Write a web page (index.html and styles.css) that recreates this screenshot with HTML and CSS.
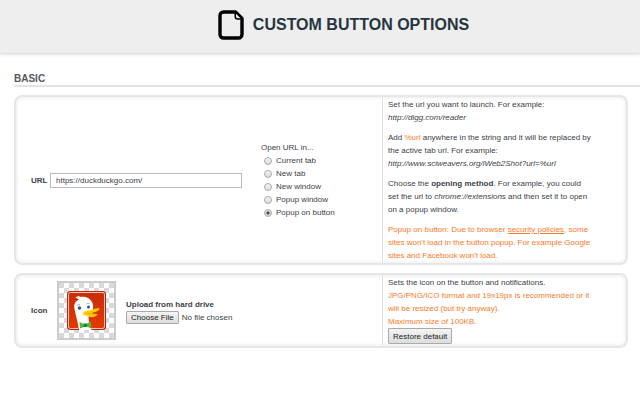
FILE: index.html
```html
<!DOCTYPE html>
<html lang="en">
<head>
<meta charset="utf-8">
<title>Custom Button Options</title>
<link rel="stylesheet" href="styles.css">
</head>
<body>
<header class="top">
  <svg class="logo" viewBox="0 0 26 30" aria-hidden="true">
    <path d="M5.500 2H17.500L24 8.500V24.500A3.500 3.500 0 0 1 20.500 28H5.500A3.500 3.500 0 0 1 2 24.500V5.500A3.500 3.500 0 0 1 5.500 2z" fill="#eee" stroke="#000" stroke-width="3.400" stroke-linejoin="round"/>
    <path d="M17.200 3v3.500q0 2.500 2.500 2.500h3.500" fill="#eee" stroke="#000" stroke-width="1.500"/>
  </svg>
  <h1 class="title">CUSTOM BUTTON OPTIONS</h1>
</header>
<main class="content">
  <h2 class="section-title">BASIC</h2>

  <section class="card">
    <div class="fields">
      <label class="name" for="url">URL</label>
      <input class="url" id="url" type="text" value="https://duckduckgo.com/">
      <fieldset class="modes">
        <legend class="legend">Open URL in...</legend>
        <label class="mode"><input class="radio" type="radio" name="mode">Current tab</label>
        <label class="mode"><input class="radio" type="radio" name="mode">New tab</label>
        <label class="mode"><input class="radio" type="radio" name="mode">New window</label>
        <label class="mode"><input class="radio" type="radio" name="mode">Popup window</label>
        <label class="mode"><input class="radio" type="radio" name="mode" checked>Popup on button</label>
      </fieldset>
    </div>
    <div class="help">
      <p class="para">Set the url you want to launch. For example: <em>http://digg.com/reader</em></p>
      <p class="para">Add <span class="key">%url</span> anywhere in the string and it will be replaced by the active tab url. For example: <em>http://www.sciweavers.org/iWeb2Shot?url=%url</em></p>
      <p class="para">Choose the <strong>opening method</strong>. For example, you could set the url to <em>chrome://extensions</em> and then set it to open on a popup window.</p>
      <p class="para warn">Popup on button: Due to browser <a class="link" href="#">security policies</a>, some sites won't load in the button popup. For example Google sites and Facebook won't load.</p>
    </div>
  </section>

  <section class="card">
    <div class="fields">
      <span class="name">Icon</span>
      <div class="preview">
        <svg class="duck" viewBox="0 0 39 39" role="img" aria-label="DuckDuckGo icon">
          <defs>
            <linearGradient id="red" x1="0" y1="0" x2="0" y2="1">
              <stop offset="0" stop-color="#c92c08"/><stop offset="1" stop-color="#e63900"/>
            </linearGradient>
          </defs>
          <rect x=".5" y=".5" width="38" height="38" rx="2.500" fill="url(#red)" stroke="#b82410"/>
          <path d="M11 37.500H3.500a2 2 0 0 1-2-2v-32a2 2 0 0 1 2-2h32a2 2 0 0 1 2 2v32a2 2 0 0 1-2 2H24" fill="none" stroke="#f7c9bc" stroke-width="1"/>
          <path d="M12 39C11 31 9 26 7.500 18c-1-5 1-8 4.500-9.500L8.500 6.500c2-1.500 4-1.500 5.500-.5 4-.8 9 1 11 5 1.500 3 1.500 6 .5 9l-4 6 .5 6 2.500 7z" fill="#fff"/>
          <path d="M9.800 14.500q1.500-1.500 3.200-.8M19.500 13q1.800-1.200 3.200 0" fill="none" stroke="#6b8eb0" stroke-width=".7"/>
          <circle cx="12.500" cy="17" r="1.700" fill="#2d4f8e"/>
          <circle cx="21.500" cy="16" r="1.500" fill="#2d4f8e"/>
          <path d="M16 22.500c0-2.500 5-2.900 8-3.500 3-.9 6-2.200 8.500-1.500-.5 2.700-5 3.700-8 4.500 2.500 1 4 1 6 1-1 3.200-6 4-9.500 2.200-2-.8-5-.8-5-2.700z" fill="#fc0"/>
          <path d="M20 22.200q4 1.300 9 .8" fill="none" stroke="#d59b00" stroke-width=".7"/>
          <path d="M12.500 31l4.500 2h2l5-2.500.5 7-4.500-1.700h-2.500L13 37.500z" fill="#4cba3c"/>
          <rect x="16.500" y="32.500" width="3.500" height="3.500" rx="1" fill="#16842b"/>
        </svg>
      </div>
      <div class="upload">
        <label class="upload-title" for="file">Upload from hard drive</label>
        <input class="file" id="file" type="file">
      </div>
    </div>
    <div class="help">
      <p class="para">Sets the icon on the button and notifications.<br>
      <span class="warn">JPG/PNG/ICO format and 19x19px is recommended or it will be resized (but try anyway).<br>Maximum size of 100KB.</span></p>
      <button class="btn" type="button">Restore default</button>
    </div>
  </section>
</main>
</body>
</html>
```
FILE: styles.css
```css
* { box-sizing: border-box; }

body {
  margin: 0;
  background: #fff;
  color: #3c4146;
  font: 8px/13px "Liberation Sans", Arial, sans-serif;
}

.top {
  display: flex;
  align-items: center;
  justify-content: center;
  gap: 9px;
  height: 54px;
  padding: 0 0 3px 47px;
  background: #eee;
  border-bottom: 1px solid #e2e2e2;
  box-shadow: 0 1px 3px #e2e2e2;
}
.logo { width: 26px; height: 30px; }
.title {
  margin: 0;
  color: #263540;
  font-size: 16px;
  line-height: 20px;
}

.content { padding: 18px 0 0 14px; }
.section-title {
  margin: 0 0 8px;
  border-bottom: 2px solid #e4e4e4;
  color: #55595d;
  font-size: 10px;
  line-height: 13px;
}

.card {
  display: grid;
  grid-template-columns: minmax(0, 3fr) minmax(0, 2fr);
  margin: 0 12px 8px 0;
  padding: 1px 0;
  border: 2px solid #e6e6e6;
  border-radius: 8px;
  box-shadow: inset 0 0 4px #e4e4e4;
}

.fields {
  display: flex;
  align-items: center;
  padding-left: 15px;
}
.name {
  width: 19px;
  font-weight: bold;
}
.url {
  flex: 1;
  min-width: 0;
  height: 15px;
  padding: 0 5px;
  border: 1px solid #bbb;
  background: #fff;
  color: inherit;
  font: inherit;
}
.modes {
  width: 140px;
  margin: 0;
  padding: 0 0 0 19px;
  border: 0;
}
.legend { padding: 0; }
.mode {
  display: flex;
  align-items: center;
  gap: 4px;
  padding-left: 3px;
}
.radio {
  appearance: none;
  width: 8px;
  height: 8px;
  margin: 0;
  border: 1px solid #aaa;
  border-radius: 50%;
  background: linear-gradient(#f4f4f4, #ddd);
}
.radio:checked { background: radial-gradient(circle, #444 0 1px, #ddd 2px); }

.help {
  padding: 0 0 0 5px;
  border-left: 1px solid #ddd;
}
.para {
  max-width: 204px;
  margin: 0 0 7px;
}
.para:last-child { margin-bottom: 0; }
.warn { color: #fa7b28; }
.key { color: #fa7b28; }
.link { color: inherit; }

.preview {
  display: flex;
  align-items: center;
  justify-content: center;
  width: 59px;
  height: 59px;
  margin: 0 10px 0 7px;
  border: 2px solid #ccc;
  background: repeating-conic-gradient(#fff 0 25%, #d9d9d9 0 50%) 0 0 / 10px 10px;
}
.duck { width: 39px; height: 39px; }

.upload {
  display: flex;
  flex-direction: column;
}
.upload-title { font-weight: bold; }
.file {
  width: 120px;
  color: inherit;
  font: inherit;
}
.file::file-selector-button,
.btn {
  height: 13px;
  margin: 0 3px 0 0;
  padding: 0 4px;
  border: 1px solid #aaa;
  border-radius: 1px;
  background: linear-gradient(#f4f4f4, #ddd);
  color: #222;
  font: inherit;
  line-height: 11px;
}
.para + .btn {
  display: block;
  height: 16px;
  margin: -7px 0 1px;
}
```
